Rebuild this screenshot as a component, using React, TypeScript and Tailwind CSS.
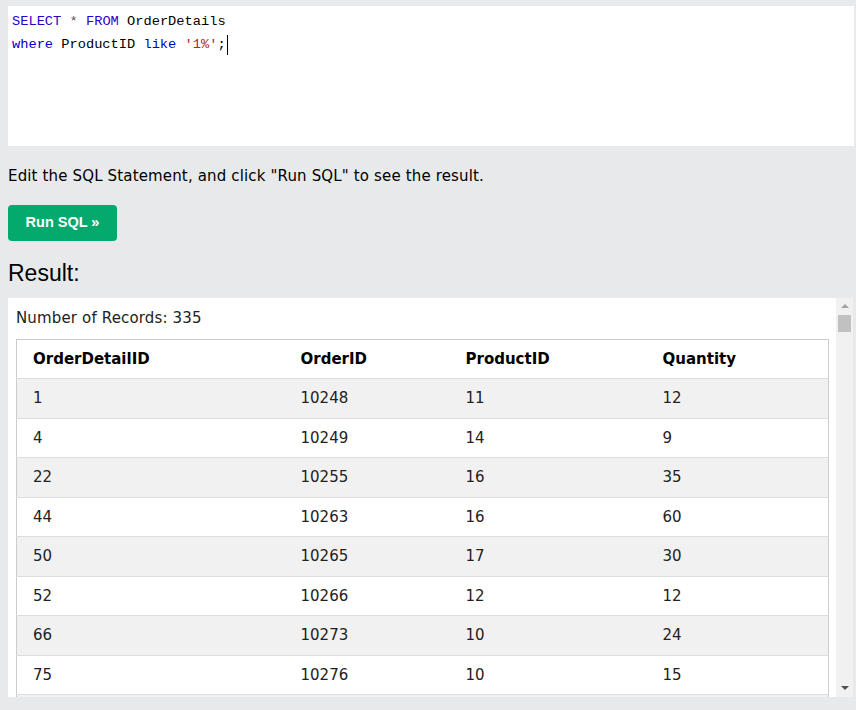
const rows = [
  ["1", "10248", "11", "12"],
  ["4", "10249", "14", "9"],
  ["22", "10255", "16", "35"],
  ["44", "10263", "16", "60"],
  ["50", "10265", "17", "30"],
  ["52", "10266", "12", "12"],
  ["66", "10273", "10", "24"],
  ["75", "10276", "10", "15"],
  ["81", "10278", "11", "16"],
];

const headers = ["OrderDetailID", "OrderID", "ProductID", "Quantity"];

export default function App() {
  return (
    <div
      className="h-[710px] w-[856px] overflow-hidden bg-[#e7e9eb] pl-2 pr-[2px] pt-[6px] text-black"
      style={{ fontFamily: "'DejaVu Sans', Verdana, sans-serif" }}
    >
      {/* editor */}
      <div className="h-[140px] bg-white px-1 pt-1 font-['Liberation_Mono',monospace] text-[13.7px] leading-[23px]">
        <div>
          <span className="text-[#2a00c8]">SELECT</span>{" "}
          <span className="text-[#555]">*</span>{" "}
          <span className="text-[#2a00c8]">FROM</span> OrderDetails
        </div>
        <div className="flex items-center">
          <span className="text-[#0000cd]">where</span>&nbsp;ProductID&nbsp;
          <span className="text-[#0000cd]">like</span>&nbsp;
          <span className="text-[#a52a2a]">'1%'</span>;
          <span className="ml-[1px] inline-block h-[20px] w-px bg-black" />
        </div>
      </div>

      <p className="mt-[19px] text-[15px] tracking-[0.15px] leading-[22px]">
        Edit the SQL Statement, and click "Run SQL" to see the result.
      </p>

      <button className="mt-[18px] flex h-9 w-[109px] items-center justify-center rounded bg-[#04aa6d] font-['Liberation_Sans',Arial,sans-serif] text-[14.5px] font-bold text-white">
        Run SQL »
      </button>

      <h2 className="mt-[15px] font-['Liberation_Sans',Arial,sans-serif] text-[23px] leading-[34px]">
        Result:
      </h2>

      {/* result box */}
      <div className="mt-[8px] flex h-[399px] w-[845px] bg-white">
        <div className="flex-1 overflow-hidden pl-2 pt-[9px]">
          <div className="mb-[9px] text-[15px] tracking-[0.15px] leading-[22.5px] text-[#222]">
            Number of Records: 335
          </div>
          <table className="w-[813px] table-fixed border-collapse border border-[#cccccc] text-[15px] leading-[22.5px]">
            <colgroup>
              <col className="w-[268px]" />
              <col className="w-[165px]" />
              <col className="w-[197px]" />
              <col />
            </colgroup>
            <thead>
              <tr className="border-b border-[#dddddd]">
                {headers.map((h) => (
                  <th key={h} className="px-4 py-2 text-left font-bold">
                    {h}
                  </th>
                ))}
              </tr>
            </thead>
            <tbody>
              {rows.map((r, i) => (
                <tr
                  key={r[0]}
                  className={`border-b border-[#dddddd] ${
                    i % 2 === 0 ? "bg-[#f1f1f1]" : "bg-white"
                  }`}
                >
                  {r.map((c, j) => (
                    <td key={j} className="px-4 py-2 text-[#222]">
                      {c}
                    </td>
                  ))}
                </tr>
              ))}
            </tbody>
          </table>
        </div>
        {/* scrollbar */}
        <div className="flex w-[17px] flex-col items-center bg-[#f1f1f1]">
          <div className="mt-[6px] h-0 w-0 border-x-[4px] border-b-[4px] border-x-transparent border-b-[#a3a3a3]" />
          <div className="mt-[7px] h-[17px] w-[13px] bg-[#c1c1c1]" />
          <div className="flex-1" />
          <div className="mb-[7px] h-0 w-0 border-x-[4px] border-t-[4px] border-x-transparent border-t-[#505050]" />
        </div>
      </div>
    </div>
  );
}
